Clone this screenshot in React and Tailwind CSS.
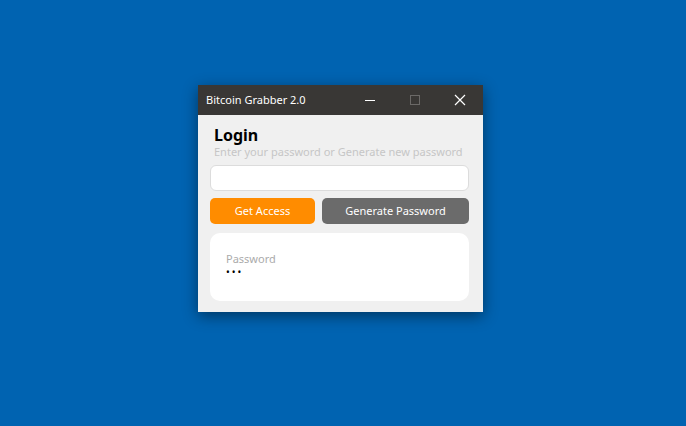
import React from "react";

export default function App() {
  return (
    <div className="w-[686px] h-[426px] bg-[#0063b1] pt-[85px] pl-[198px]" style={{ fontFamily: '"Noto Sans", "Open Sans", sans-serif' }}>
      <div className="w-[285px] h-[227px] bg-[#f0f0f0] flex flex-col shadow-[0_4px_14px_rgba(0,0,0,0.45)]">
        {/* title bar */}
        <div className="h-[30px] bg-[#393735] flex items-center text-white">
          <div className="pl-[8px] text-[11px] flex-1">Bitcoin Grabber 2.0</div>
          <div className="w-[45px] h-full flex items-center justify-center">
            <div className="w-[10px] h-px bg-white" />
          </div>
          <div className="w-[45px] h-full flex items-center justify-center">
            <div className="w-[10px] h-[10px] border border-[#6b6967]" />
          </div>
          <div className="w-[46px] h-full flex items-center justify-center">
            <svg width="12" height="12" viewBox="0 0 12 12">
              <path d="M1 1L11 11M11 1L1 11" stroke="white" strokeWidth="1.2" />
            </svg>
          </div>
        </div>
        {/* body */}
        <div className="pl-[12px] pr-[14px] pt-[11px] flex flex-col">
          <div className="pl-[4px] text-[16px] font-bold leading-[19px] text-black">Login</div>
          <div className="pl-[4px] text-[11px] leading-[13px] whitespace-nowrap text-[#c6c6c6]">Enter your password or Generate new password</div>
          <div className="mt-[7px] h-[26px] bg-white border border-[#dcdcdc] rounded-[6px]" />
          <div className="mt-[7px] flex gap-[7px]">
            <div className="w-[105px] h-[26px] bg-[#ff8c00] rounded-[5px] text-white text-[11px] flex items-center justify-center">Get Access</div>
            <div className="flex-1 h-[26px] bg-[#6b6b6b] rounded-[5px] text-white text-[11px] flex items-center justify-center">Generate Password</div>
          </div>
          <div className="mt-[9px] h-[68px] bg-white rounded-[10px] px-[16px] pt-[19px]">
            <div className="text-[11px] leading-[14px] text-[#ababab]">Password</div>
            <div className="text-[10px] leading-[12px] text-black tracking-[2px]">•••</div>
          </div>
        </div>
      </div>
    </div>
  );
}
